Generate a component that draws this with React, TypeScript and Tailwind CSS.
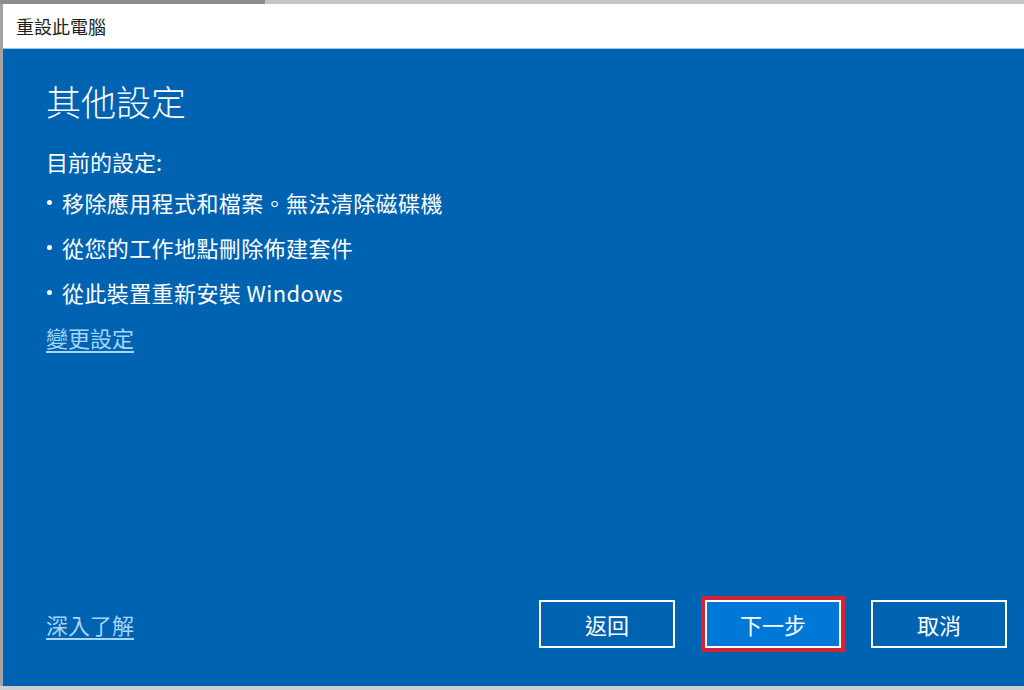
import React from "react";

const items = [
  "移除應用程式和檔案。無法清除磁碟機",
  "從您的工作地點刪除佈建套件",
  "從此裝置重新安裝 Windows",
];

const App: React.FC = () => {
  return (
    <div className="w-[1024px] h-[690px] flex flex-col bg-[#c9ccd0] font-['Noto_Sans_CJK_TC','Noto_Sans',sans-serif] overflow-hidden">
      <div className="h-[4px] flex">
        <div className="w-[265px] bg-[#8e8e8e]" />
        <div className="flex-1 bg-[#c6c6c6]" />
      </div>
      <div className="flex-1 flex flex-col border-l-[3px] border-[#a3a3a3]">
        <div className="h-[44px] bg-white flex items-center pl-[13px] text-[18px] text-[#1e1e1e]">
          重設此電腦
        </div>
        <div className="h-px bg-[#8ecbf0]" />
        <div className="flex-1 bg-[#0063b1] flex flex-col pl-[43px] pr-[17px] pt-[30px] pb-[38px] text-white">
          <h1 className="text-[35px] leading-[44px] font-light">其他設定</h1>
          <p className="mt-[19px] text-[22px] leading-[38px]">目前的設定:</p>
          <ul>
            {items.map((t) => (
              <li key={t} className="text-[22px] leading-[45px] flex items-center tracking-[0.4px]">
                <span className="w-[16px] flex">
                  <span className="w-[5px] h-[5px] rounded-full bg-white ml-[1px]" />
                </span>
                <span>{t}</span>
              </li>
            ))}
          </ul>
          <a className="text-[22px] leading-[45px] text-[#a3d6f7] underline underline-offset-4 self-start">
            變更設定
          </a>
          <div className="mt-auto flex items-center">
            <a className="text-[22px] text-[#a3d6f7] underline underline-offset-4">深入了解</a>
            <div className="ml-auto flex gap-[30px]">
              <button className="w-[136px] h-[48px] border-2 border-white text-[22px]">返回</button>
              <button className="w-[136px] h-[48px] border-2 border-white bg-[#0078d7] text-[22px] ring-4 ring-[#d42331]">
                下一步
              </button>
              <button className="w-[136px] h-[48px] border-2 border-white text-[22px]">取消</button>
            </div>
          </div>
        </div>
      </div>
      <div className="h-[4px]" />
    </div>
  );
};

export default App;
